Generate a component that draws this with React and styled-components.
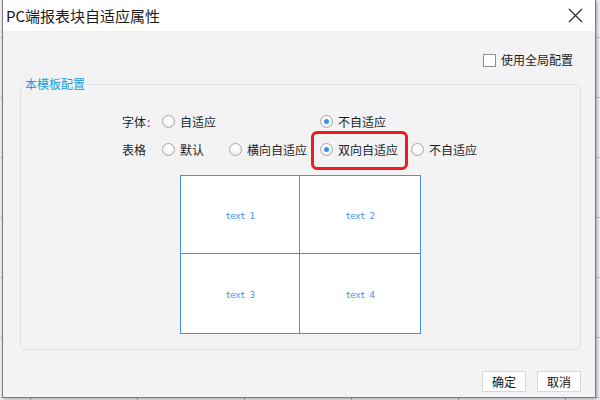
import React from "react";
import styled, { createGlobalStyle } from "styled-components";

const GlobalStyle = createGlobalStyle`
  html, body {
    margin: 0;
    padding: 0;
    background: #e6e9ef;
  }
  body {
    font-family: "Noto Sans CJK SC", "Noto Sans", sans-serif;
    font-size: 12px;
    color: #1e1e1e;
  }
`;

const Backdrop = styled.div`
  width: 600px;
  height: 400px;
  overflow: hidden;
  padding-left: 2px;
  box-sizing: border-box;
  background-color: #eef0f4;
  background-image:
    linear-gradient(to right, #a9abb0 1px, transparent 1px),
    linear-gradient(to bottom, #c4c6cb 1px, transparent 1px);
  background-size: 107px 100%, 100% 60px;
  background-position: 30px 0, 0 37px;
`;

const Dialog = styled.div`
  width: 594px;
  height: 398px;
  box-sizing: border-box;
  border: 1px solid #7c7c7c;
  border-top: 0;
  display: flex;
  flex-direction: column;
  background: #f3f3f5;
  box-shadow: 1px 1px 3px rgba(0, 0, 0, 0.35);
`;

const TitleBar = styled.div`
  height: 31px;
  flex-shrink: 0;
  background: #fff;
  display: flex;
  align-items: center;
  justify-content: space-between;
  padding: 0 10px 0 3px;
`;

const Title = styled.div`
  font-size: 15px;
  color: #1a1a1a;
`;

const CloseButton = styled.div`
  width: 16px;
  height: 16px;
  display: flex;
  align-items: center;
  justify-content: center;
  margin-right: 2px;
`;

const Body = styled.div`
  flex: 1;
  display: flex;
  flex-direction: column;
  padding: 0 14px 0 17px;
`;

const TopBar = styled.div`
  display: flex;
  justify-content: flex-end;
  margin-top: 21px;
  padding-right: 8px;
`;

const CheckLabel = styled.label`
  display: flex;
  align-items: center;
  gap: 5px;
  height: 16px;
  line-height: 16px;
`;

const CheckBox = styled.span`
  width: 11px;
  height: 11px;
  border: 1px solid #8f8f8f;
  background: #fff;
`;

const Group = styled.fieldset`
  margin: 8px 0 0 0;
  padding: 0 0 15px 0;
  border: 1px solid #e2e2e6;
  border-radius: 6px;
  min-width: 0;
`;

const Legend = styled.legend`
  margin-left: 3px;
  padding: 0 1px;
  font-size: 12px;
  line-height: 16px;
  color: #179ddf;
`;

const Options = styled.div`
  display: grid;
  grid-template-columns: 40px 67px 83px 95px auto;
  grid-auto-rows: 28px;
  margin: 15px 0 0 101px;
`;

const RowLabel = styled.div`
  display: flex;
  align-items: center;
  grid-column: 1;

  span {
    color: #7b2c86;
    margin-left: 1px;
  }
`;

const Option = styled.label`
  position: relative;
  display: flex;
  align-items: center;
  gap: 5px;
  grid-column: ${(p) => p.col};
  padding-left: ${(p) => p.pad || 0}px;
  white-space: nowrap;

  ${(p) =>
    p.highlight &&
    `
    &::after {
      content: "";
      position: absolute;
      left: -1px;
      right: -1px;
      top: -4px;
      bottom: -7px;
      border: 3px solid #f01c1c;
      border-radius: 6px;
      pointer-events: none;
    }
  `}
`;

const Radio = styled.span`
  width: 11px;
  height: 11px;
  flex-shrink: 0;
  border-radius: 50%;
  border: 1px solid #a8a8a8;
  background: radial-gradient(circle at 50% 35%, #ffffff 30%, #e4e4e4 100%);
  display: flex;
  align-items: center;
  justify-content: center;

  &::before {
    content: "";
    width: 5px;
    height: 5px;
    border-radius: 50%;
    background: ${(p) => (p.checked ? "#3d8af0" : "transparent")};
  }
`;

const Preview = styled.div`
  display: grid;
  grid-template-columns: 119px 120px;
  grid-template-rows: 78px 79px;
  width: 239px;
  margin: 12px 0 0 159px;
  border: 1px solid #4a8ef0;
  background: #fff;
`;

const Cell = styled.div`
  display: flex;
  align-items: center;
  justify-content: center;
  padding-top: 3px;
  font-family: "DejaVu Sans Mono", monospace;
  font-size: 9px;
  letter-spacing: -0.6px;
  color: #4a8ef0;
  border-right: ${(p) => (p.right ? "1px solid #4a8ef0" : "0")};
  border-bottom: ${(p) => (p.bottom ? "1px solid #4a8ef0" : "0")};
`;

const Footer = styled.div`
  display: flex;
  justify-content: flex-end;
  gap: 11px;
  margin-top: 21px;
`;

const Button = styled.button`
  width: 44px;
  height: 21px;
  padding: 0;
  border: 1px solid #d8d8d8;
  background: #fff;
  font-family: "Noto Sans CJK SC", sans-serif;
  font-size: 12px;
  color: #111;
`;

const fontOptions = [
  { text: "自适应", col: 2 },
  { text: "不自适应", col: 4, pad: 8, checked: true },
];

const tableOptions = [
  { text: "默认", col: 2 },
  { text: "横向自适应", col: 3 },
  { text: "双向自适应", col: 4, pad: 8, checked: true, highlight: true },
  { text: "不自适应", col: 5, pad: 4 },
];

const renderOption = (o) => (
  <Option key={o.text} col={o.col} pad={o.pad} highlight={o.highlight}>
    <Radio checked={o.checked} />
    {o.text}
  </Option>
);

const App = () => (
  <>
    <GlobalStyle />
    <Backdrop>
      <Dialog>
        <TitleBar>
          <Title>PC端报表块自适应属性</Title>
          <CloseButton>
            <svg width="15" height="15" viewBox="0 0 15 15">
              <path d="M1 1 L14 14 M14 1 L1 14" stroke="#2a2a2a" strokeWidth="1.2" fill="none" />
            </svg>
          </CloseButton>
        </TitleBar>
        <Body>
          <TopBar>
            <CheckLabel>
              <CheckBox />
              使用全局配置
            </CheckLabel>
          </TopBar>
          <Group>
            <Legend>本模板配置</Legend>
            <Options>
              <RowLabel>
                字体<span>:</span>
              </RowLabel>
              {fontOptions.map(renderOption)}
              <RowLabel>表格</RowLabel>
              {tableOptions.map(renderOption)}
            </Options>
            <Preview>
              <Cell right bottom>text 1</Cell>
              <Cell bottom>text 2</Cell>
              <Cell right>text 3</Cell>
              <Cell>text 4</Cell>
            </Preview>
          </Group>
          <Footer>
            <Button>确定</Button>
            <Button>取消</Button>
          </Footer>
        </Body>
      </Dialog>
    </Backdrop>
  </>
);

export default App;
